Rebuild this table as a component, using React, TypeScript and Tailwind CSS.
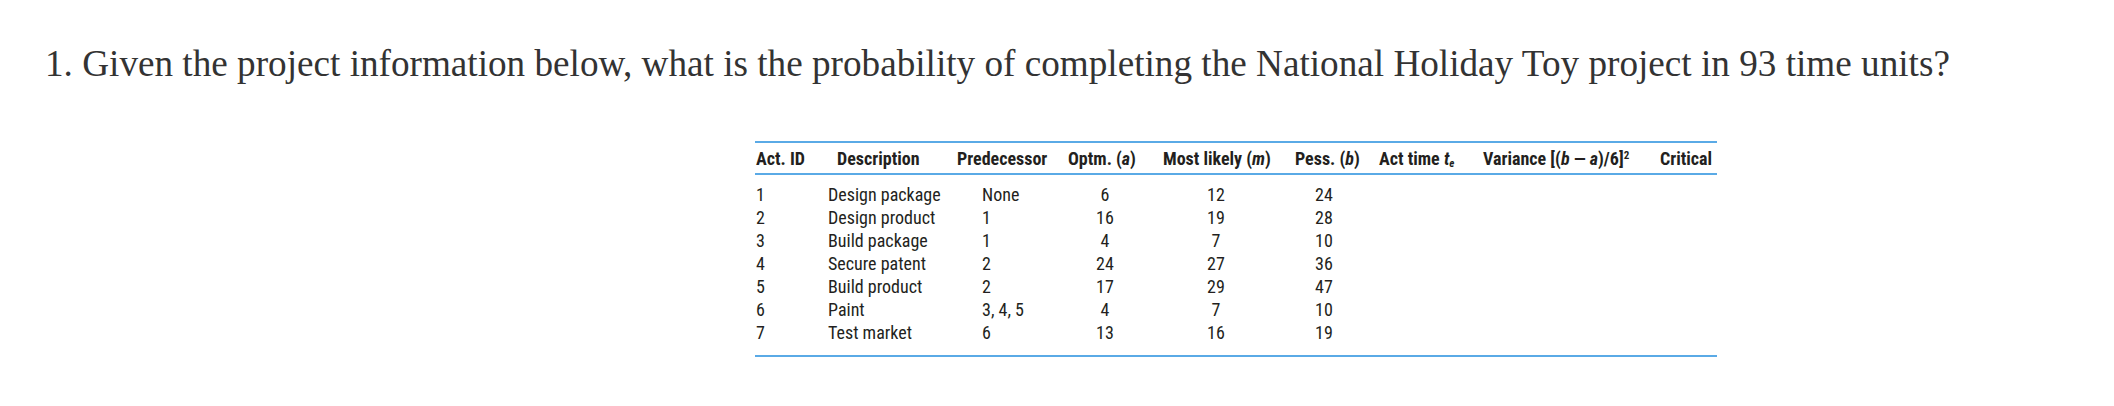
import React from "react";

const rows = [
  ["1", "Design package", "None", "6", "12", "24"],
  ["2", "Design product", "1", "16", "19", "28"],
  ["3", "Build package", "1", "4", "7", "10"],
  ["4", "Secure patent", "2", "24", "27", "36"],
  ["5", "Build product", "2", "17", "29", "47"],
  ["6", "Paint", "3, 4, 5", "4", "7", "10"],
  ["7", "Test market", "6", "13", "16", "19"],
];

const cond = { fontFamily: '"Liberation Sans Narrow", "Roboto Condensed", Roboto, sans-serif' };

export default function App() {
  return (
    <div className="bg-white w-[2114px] h-[406px]">
      <div className="pt-[44px] pl-[45px] text-[37.2px] leading-[40px] text-[#333333] whitespace-nowrap" style={{ fontFamily: '"Liberation Serif", serif' }}>
        1. Given the project information below, what is the probability of completing the National Holiday Toy project in 93 time units?
      </div>
      <div className="ml-[755px] mt-[57px] w-[962px] border-t-2 border-b-2 border-[#5aaae6] text-[#231f20]" style={cond}>
        <div className="flex h-[32px] items-center border-b-2 border-[#5aaae6] font-bold text-[18px] whitespace-nowrap">
          <div className="w-[82px] pl-[1px]">Act. ID</div>
          <div className="w-[120px]">Description</div>
          <div className="w-[111px]">Predecessor</div>
          <div className="w-[95px]">Optm. (<i>a</i>)</div>
          <div className="w-[132px]">Most likely (<i>m</i>)</div>
          <div className="w-[84px]">Pess. (<i>b</i>)</div>
          <div className="w-[104px]">Act time <i>t</i><sub className="text-[11px]"><i>e</i></sub></div>
          <div className="w-[177px]">Variance [(<i>b</i> — <i>a</i>)/6]<sup className="text-[11px]">2</sup></div>
          <div className="w-[57px]">Critical</div>
        </div>
        <div className="pt-[8px] pb-[11px] text-[18px] leading-[23px]">
          {rows.map((r) => (
            <div key={r[0]} className="flex h-[23px] whitespace-nowrap">
              <div className="w-[73px] pl-[1px]">{r[0]}</div>
              <div className="w-[154px]">{r[1]}</div>
              <div className="w-[88px]">{r[2]}</div>
              <div className="w-[70px] text-center">{r[3]}</div>
              <div className="w-[152px] text-center">{r[4]}</div>
              <div className="w-[64px] text-center">{r[5]}</div>
            </div>
          ))}
        </div>
      </div>
    </div>
  );
}
